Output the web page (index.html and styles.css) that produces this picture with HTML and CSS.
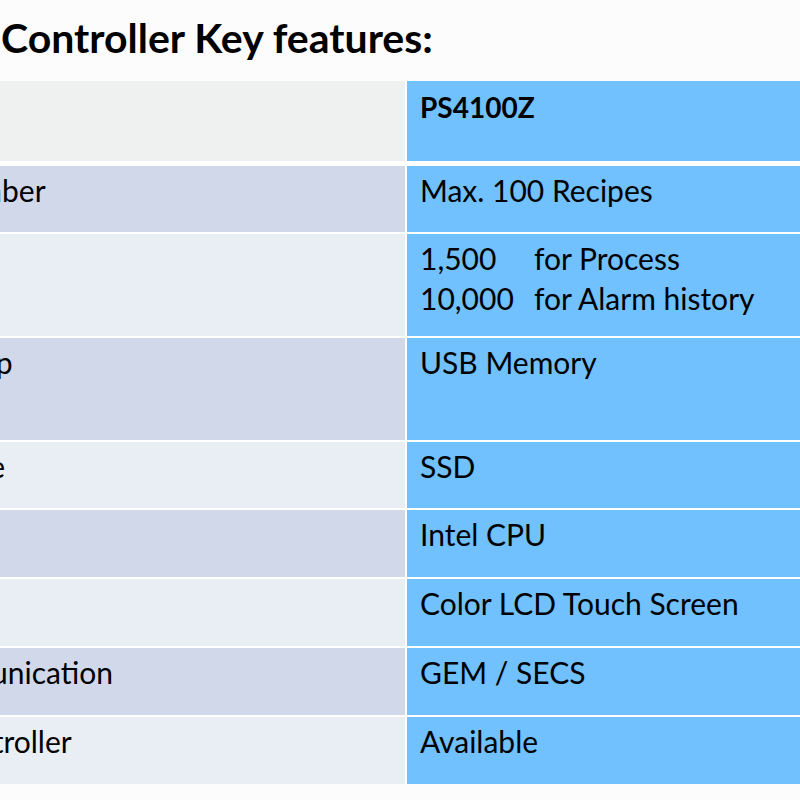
FILE: index.html
```html
<!DOCTYPE html>
<html lang="en">
<head>
<meta charset="utf-8">
<title>Controller Key features</title>
<link rel="stylesheet" href="styles.css">
</head>
<body>
<h1 class="title">Controller Key features:</h1>
<div class="spec-table">
  <div class="cell key head"></div>
  <div class="cell val head"><strong>PS4100Z</strong></div>

  <div class="cell key odd h66">ID number</div>
  <div class="cell val h66">Max. 100 Recipes</div>

  <div class="cell key even h102">Logs</div>
  <div class="cell val h102">
    <div class="pair"><span class="num">1,500</span><span>for Process</span></div>
    <div class="pair"><span class="num">10,000</span><span>for Alarm history</span></div>
  </div>

  <div class="cell key odd h102">Back-up</div>
  <div class="cell val h102">USB Memory</div>

  <div class="cell key even h66">Storage</div>
  <div class="cell val h66">SSD</div>

  <div class="cell key odd h67">CPU</div>
  <div class="cell val h67">Intel CPU</div>

  <div class="cell key even h67">Screen</div>
  <div class="cell val h67">Color LCD Touch Screen</div>

  <div class="cell key odd h67">Communication</div>
  <div class="cell val h67">GEM / SECS</div>

  <div class="cell key even h67">IO controller</div>
  <div class="cell val h67">Available</div>
</div>
</body>
</html>
```

FILE: styles.css
```css
html, body {
  margin: 0;
  padding: 0;
}
body {
  background: #fcfcfc;
  font-family: Lato, "Open Sans", "DejaVu Sans", sans-serif;
  color: #000;
  overflow: hidden;
  width: 800px;
  height: 800px;
}
.title {
  margin: 0 0 23px 0;
  padding: 17px 0 0 1px;
  font-size: 41px;
  line-height: 41px;
  font-weight: 700;
  white-space: nowrap;
}
.spec-table {
  display: grid;
  grid-template-columns: 513px 420px;
  column-gap: 2px;
  row-gap: 2px;
  margin-left: -108px;
  background: #ffffff;
  width: 935px;
}
.cell {
  box-sizing: border-box;
  padding: 4px 0 0 13px;
  font-size: 30px;
  line-height: 40px;
  white-space: nowrap;
}
.head {
  height: 80px;
  padding-top: 6px;
  margin-bottom: 3px;
  font-size: 28px;
}
.head strong {
  font-weight: 700;
}
.key.head { background: #eff1f1; }
.odd { background: #d0d8e9; }
.even { background: #e9edf4; }
.val { background: #70c1fe; }
.h66 { height: 66px; }
.h67 { height: 67px; }
.h102 { height: 102px; }
.pair {
  display: flex;
}
.num {
  width: 114px;
}
```
